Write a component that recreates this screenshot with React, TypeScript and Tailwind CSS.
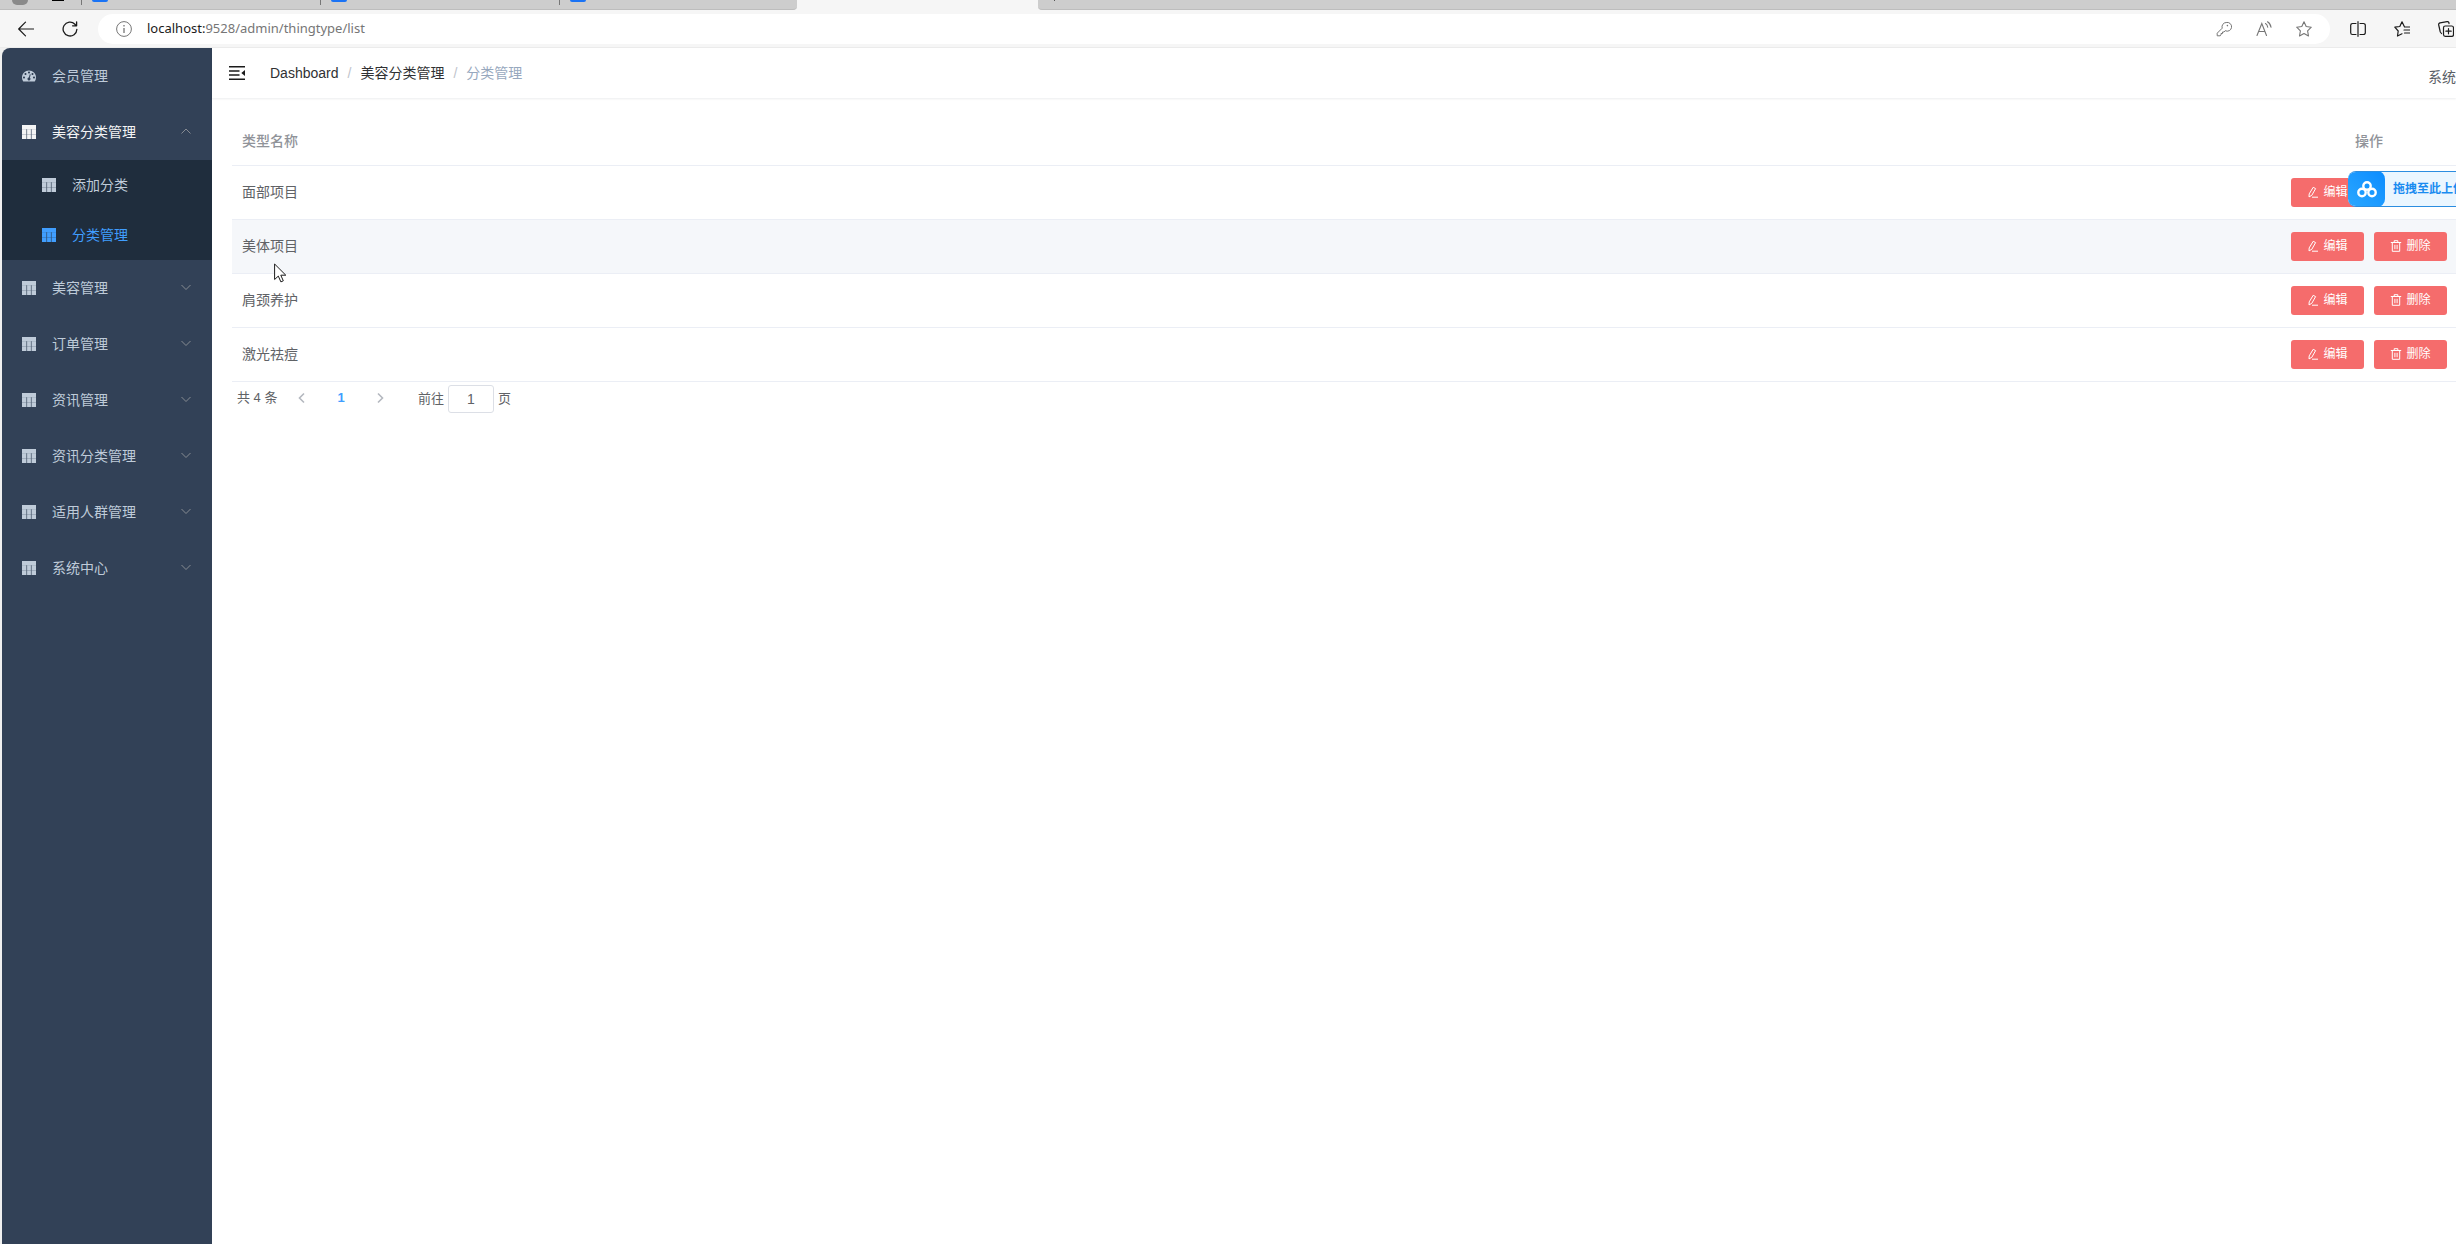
import React from "react";

const NAV_TEXT = "#bfcbd9";

function TableIcon() {
  return (
    <svg viewBox="0 0 14 14" className="size-3.5 shrink-0" aria-hidden="true">
      <path d="M0 0h14v14H0z" fill="currentColor" fillOpacity="0.55" />
      <path
        d="M0 0h14v4H0zM0 4.300h4.500v4.700H0zM5 4.300h4v4.700H5zM9.500 4.300H14v4.700H9.500zM0 9.600h4.500V14H0zM5 9.600h4V14H5zM9.500 9.600H14V14H9.500z"
        fill="currentColor"
      />
      <path d="M4.700 4.300V14M9.300 4.300V14" stroke="#304156" strokeWidth="0.500" />
    </svg>
  );
}

function DashboardIcon() {
  return (
    <svg viewBox="0 0 128 100" className="h-3 w-3.5 shrink-0" fill={NAV_TEXT} aria-hidden="true">
      <path d="M27.429 63.638c0-2.508-.893-4.655-2.679-6.441-1.786-1.786-3.94-2.68-6.464-2.68-2.524 0-4.679.894-6.465 2.68-1.785 1.786-2.678 3.933-2.678 6.44 0 2.509.893 4.656 2.678 6.442 1.786 1.786 3.941 2.678 6.465 2.678s4.678-.892 6.464-2.678c1.786-1.786 2.679-3.933 2.679-6.441zm13.714-31.825c0-2.508-.893-4.655-2.679-6.441-1.785-1.786-3.94-2.679-6.464-2.679-2.524 0-4.679.893-6.464 2.68-1.786 1.785-2.679 3.932-2.679 6.44 0 2.508.893 4.655 2.679 6.441 1.785 1.786 3.94 2.679 6.464 2.679 2.524 0 4.679-.893 6.464-2.679 1.786-1.786 2.679-3.933 2.679-6.44zM71.714 65.98l7.215-27.116c.285-1.23.107-2.378-.536-3.443-.643-1.064-1.56-1.762-2.75-2.094-1.19-.33-2.333-.177-3.429.462-1.095.639-1.81 1.573-2.143 2.804l-7.214 27.116c-2.857.237-5.405 1.266-7.643 3.088-2.238 1.822-3.738 4.152-4.5 6.992-.952 3.644-.476 7.098 1.429 10.364 1.905 3.265 4.69 5.37 8.357 6.317 3.667.947 7.143.474 10.429-1.42 3.285-1.892 5.404-4.66 6.357-8.305.762-2.84.619-5.607-.429-8.305-1.047-2.697-2.762-4.85-5.143-6.46zm47.143-2.342c0-2.508-.893-4.655-2.678-6.441-1.786-1.786-3.941-2.68-6.465-2.68-2.524 0-4.678.894-6.464 2.68-1.786 1.786-2.679 3.933-2.679 6.44 0 2.509.893 4.656 2.679 6.442 1.786 1.786 3.94 2.678 6.464 2.678 2.524 0 4.679-.892 6.465-2.678 1.785-1.786 2.678-3.933 2.678-6.441zm-45.714-45.43c0-2.509-.893-4.656-2.679-6.441C68.68 9.98 66.524 9.087 64 9.087c-2.524 0-4.679.893-6.464 2.679-1.786 1.785-2.679 3.932-2.679 6.44 0 2.508.893 4.655 2.679 6.441 1.785 1.786 3.94 2.679 6.464 2.679 2.524 0 4.679-.893 6.464-2.679 1.786-1.786 2.679-3.933 2.679-6.44zm32 13.605c0-2.508-.893-4.655-2.679-6.441-1.785-1.786-3.94-2.679-6.464-2.679-2.524 0-4.679.893-6.464 2.68-1.786 1.785-2.679 3.932-2.679 6.44 0 2.508.893 4.655 2.679 6.441 1.785 1.786 3.94 2.679 6.464 2.679 2.524 0 4.679-.893 6.464-2.679 1.786-1.786 2.679-3.933 2.679-6.44zM128 63.638c0 12.351-3.357 23.78-10.071 34.286-.905 1.372-2.19 2.058-3.858 2.058H13.93c-1.667 0-2.953-.686-3.858-2.058C3.357 87.465 0 76.037 0 63.638c0-8.613 1.69-16.847 5.071-24.703C8.452 31.08 13 24.312 18.714 18.634c5.715-5.68 12.524-10.199 20.429-13.559C47.048 1.715 55.333.035 64 .035c8.667 0 16.952 1.68 24.857 5.04 7.905 3.36 14.714 7.88 20.429 13.559 5.714 5.678 10.262 12.446 13.643 20.301 3.38 7.856 5.071 16.09 5.071 24.703z" />
    </svg>
  );
}

function Chevron({ up }: { up?: boolean }) {
  return (
    <svg
      viewBox="0 0 12 12"
      className="ml-auto size-3 shrink-0"
      fill="none"
      stroke="#909399"
      strokeWidth="0.900"
      aria-hidden="true"
    >
      <path d={up ? "M1.500 7.500 6 3l4.500 4.500" : "M1.500 3 6 7.500 10.500 3"} />
    </svg>
  );
}

function MenuItem({ label, open }: { label: string; open?: boolean }) {
  return (
    <button
      type="button"
      aria-expanded={!!open}
      className={
        open
          ? "flex h-14 w-full items-center px-5 text-[#f4f4f5]"
          : "flex h-14 w-full items-center px-5 text-[#bfcbd9]"
      }
    >
      <TableIcon />
      <span className="ml-4">{label}</span>
      <Chevron up={open} />
    </button>
  );
}

function Sidebar() {
  const rest = ["美容管理", "订单管理", "资讯管理", "资讯分类管理", "适用人群管理", "系统中心"];
  return (
    <nav className="w-[210px] shrink-0 rounded-tl-lg bg-[#324157] text-sm">
      <a href="#members" className="flex h-14 items-center pl-5 text-[#bfcbd9]">
        <DashboardIcon />
        <span className="ml-4">会员管理</span>
      </a>
      <MenuItem label="美容分类管理" open />
      <div className="bg-[#1f2d3d]">
        <a href="#add" className="flex h-[50px] items-center pl-10 text-[#bfcbd9]">
          <TableIcon />
          <span className="ml-4">添加分类</span>
        </a>
        <a href="#list" className="flex h-[50px] items-center pl-10 text-[#409eff]">
          <TableIcon />
          <span className="ml-4">分类管理</span>
        </a>
      </div>
      {rest.map((label) => (
        <MenuItem key={label} label={label} />
      ))}
    </nav>
  );
}

function BackgroundTab({ className }: { className: string }) {
  return (
    <div className={className}>
      <span className="ml-2.5 h-0.5 w-4 rounded-b-sm bg-[#1a73f5]" />
    </div>
  );
}

function TabStrip() {
  return (
    <div className="flex h-2.5 items-start bg-[#f6f6f6]">
      <div className="flex h-full w-[797px] items-start rounded-br-sm border-b border-[#bdbdbd] bg-[#cdcdcd]">
        <span className="ml-3 h-[5px] w-4 rounded-b-full bg-[#8a8a8a]" />
        <span className="ml-6 h-px w-3 bg-black" />
        <span className="w-[17px]" />
        <BackgroundTab className="flex h-[5px] w-[239px] items-start border-l border-[#777]" />
        <BackgroundTab className="flex h-[5px] w-[239px] items-start border-l border-[#777]" />
        <BackgroundTab className="flex h-[5px] w-[200px] items-start border-l border-[#777]" />
      </div>
      <div className="w-[241px]" />
      <div className="flex h-full flex-1 items-start rounded-bl-sm border-b border-[#bdbdbd] bg-[#cdcdcd]">
        <span className="ml-4 h-px w-px bg-[#555]" />
      </div>
    </div>
  );
}

function BrowserBar() {
  return (
    <div className="flex h-[38px] items-center border-b border-[#ececec] bg-[#f6f6f6] pl-[18px] text-[#1b1b1b]">
      <button type="button" aria-label="Back" className="size-4">
        <svg viewBox="0 0 16 16" fill="none" stroke="currentColor" strokeWidth="1.2" strokeLinecap="round" strokeLinejoin="round">
          <path d="M15.500 8H.8M7.500 1.200.7 8l6.800 6.800" />
        </svg>
      </button>
      <button type="button" aria-label="Refresh" className="ml-7 size-4">
        <svg viewBox="0 0 16 16" fill="none" stroke="currentColor" strokeWidth="1.3" strokeLinecap="round" strokeLinejoin="round">
          <path d="M14.900 8.300A6.900 6.900 0 1 1 12.900 3.200l1.300 1.400M14.600.8v4h-4" />
        </svg>
      </button>
      <div className="ml-5 flex h-[30px] flex-1 items-center rounded-full bg-white px-[18px] text-[#767676]">
        <svg viewBox="0 0 16 16" className="size-4" fill="none" stroke="currentColor" aria-hidden="true">
          <circle cx="8" cy="8" r="7.400" />
          <path d="M8 7v5M8 4v1.400" strokeWidth="1.300" />
        </svg>
        <p className="ml-[15px] font-['Noto_Sans','Open_Sans',sans-serif] text-[13px]">
          <span className="text-[#1b1b1b]">localhost:</span>9528/admin/thingtype/list
        </p>
        <div className="ml-auto flex items-center gap-6">
          <button type="button" aria-label="Passwords" className="size-4">
            <svg viewBox="0 0 16 16" fill="none" stroke="currentColor" strokeWidth="1" strokeLinejoin="round">
              <path d="M10.200 1.500a4.400 4.400 0 1 1-1 8.200L8 11H6.500v1.500H5V14l-.8.800H1.200v-2.600l5-5a4.400 4.400 0 0 1 4-5.700z" />
              <circle cx="11.400" cy="4.600" r=".8" fill="currentColor" stroke="none" />
            </svg>
          </button>
          <button type="button" aria-label="Read aloud" className="size-4">
            <svg viewBox="0 0 16 16" fill="none" stroke="currentColor" strokeWidth="1.100" strokeLinecap="round">
              <path d="M1 14.500 5.800 2.500l4.700 12M2.700 10.500h6.200M9.500 2.500c1.300.8 2 2 2.200 3.800M11.500.8c2 1.200 3.200 3 3.500 5.500" />
            </svg>
          </button>
          <button type="button" aria-label="Favorite" className="size-4">
            <svg viewBox="0 0 16 16" fill="none" stroke="currentColor" strokeWidth="1.100" strokeLinejoin="round">
              <path d="m8 .8 2.200 4.700 5.100.7-3.700 3.600.9 5.200L8 12.500 3.500 15l.9-5.200L.7 6.200l5.100-.7z" />
            </svg>
          </button>
        </div>
      </div>
      <div className="ml-5 flex w-[106px] shrink-0 items-center gap-7 overflow-hidden">
        <button type="button" aria-label="Split screen" className="size-4 shrink-0">
          <svg viewBox="0 0 16 16" fill="none" stroke="currentColor" strokeWidth="1.200" strokeLinecap="round">
            <path d="M6 2.500H2.500a1.800 1.800 0 0 0-1.800 1.800v7.400a1.800 1.800 0 0 0 1.800 1.800H6M10 2.500h3.500a1.800 1.800 0 0 1 1.800 1.800v7.400a1.800 1.800 0 0 1-1.800 1.800H10M8 .7v14.600" />
          </svg>
        </button>
        <button type="button" aria-label="Favorites list" className="size-4 shrink-0">
          <svg viewBox="0 0 16 16" fill="none" stroke="currentColor" strokeWidth="1.200" strokeLinecap="round" strokeLinejoin="round">
            <path d="M8 12.800 3.500 15l.7-5L.8 6.200l5-.7L8 .8l2.300 4.700M10.500 6h5M10 9h5.500M10.500 12h5" />
          </svg>
        </button>
        <button type="button" aria-label="Collections" className="size-4 shrink-0">
          <svg viewBox="0 0 16 16" fill="none" stroke="currentColor" strokeWidth="1.200" strokeLinecap="round" strokeLinejoin="round">
            <rect x="5.500" y="5" width="10" height="10.300" rx="1.800" />
            <path d="M10.500 7.500v5.300M7.900 10.200h5.300M3.500 12.500 2.300 11 .7 4a1.800 1.800 0 0 1 1.400-2.200L9 .6a1.800 1.800 0 0 1 2 1.400v.6" />
          </svg>
        </button>
      </div>
    </div>
  );
}

function Navbar() {
  return (
    <header className="flex h-[50px] items-center bg-white shadow-[0_1px_2px_rgba(0,21,41,0.08)]">
      <button type="button" aria-label="Toggle sidebar" className="ml-[17px] size-4">
        <svg viewBox="0 0 16 16" fill="none" stroke="#1b1b1b" strokeWidth="1.500">
          <path d="M0 1.800h16M0 6h10.500M0 10h10.500M0 14.200h16" />
          <path d="M16 5v6L12.300 8z" fill="#1b1b1b" stroke="none" />
        </svg>
      </button>
      <nav aria-label="Breadcrumb" className="ml-[25px] flex items-center gap-[9px] text-sm text-[#303133]">
        <a href="#dashboard">Dashboard</a>
        <span className="text-[#c0c4cc]">/</span>
        <a href="#types">美容分类管理</a>
        <span className="text-[#c0c4cc]">/</span>
        <span className="text-[#97a8be]">分类管理</span>
      </nav>
      <div className="ml-auto w-7 overflow-hidden pt-2 text-sm whitespace-nowrap text-[#5a5e66]">系统</div>
    </header>
  );
}

function EditIcon() {
  return (
    <svg viewBox="0 0 12 12" className="size-3" fill="none" stroke="currentColor" aria-hidden="true">
      <path d="M6.200 1.300 8.600 2.600 4.800 9.300 2 10.900 2.200 7.900zM5 11.200h6" />
    </svg>
  );
}

function DeleteIcon() {
  return (
    <svg viewBox="0 0 12 12" className="size-3" fill="none" stroke="currentColor" aria-hidden="true">
      <path d="M.8 2.500h10.400M4.200 2.500v-1.800h3.600v1.800M2.300 2.500v8.800h7.400V2.500M4.900 4.800v4.400M7.100 4.800v4.400" />
    </svg>
  );
}

function ActionButton({ icon, label }: { icon: React.ReactNode; label: string }) {
  return (
    <button
      type="button"
      className="flex h-[29px] w-[73px] items-center justify-center gap-1 rounded-[3px] bg-[#f56c6c] text-xs text-white"
    >
      {icon}
      {label}
    </button>
  );
}

function TypeTable() {
  const rows = ["面部项目", "美体项目", "肩颈养护", "激光祛痘"];
  return (
    <table className="w-full table-fixed border-collapse text-sm text-[#606266]">
      <thead>
        <tr className="h-[47px] border-b border-[#ebeef5] text-[#909399]">
          <th className="px-2.5 text-left font-medium">类型名称</th>
          <th className="w-[174px] text-center font-medium">操作</th>
        </tr>
      </thead>
      <tbody>
        {rows.map((name, i) => (
          <tr
            key={name}
            className={i === 1 ? "h-[54px] border-b border-[#ebeef5] bg-[#f5f7fa]" : "h-[54px] border-b border-[#ebeef5]"}
          >
            <td className="px-2.5">{name}</td>
            <td>
              <div className="flex justify-center gap-2.5">
                <ActionButton icon={<EditIcon />} label="编辑" />
                <ActionButton icon={<DeleteIcon />} label="删除" />
              </div>
            </td>
          </tr>
        ))}
      </tbody>
    </table>
  );
}

function PageArrow({ label, path }: { label: string; path: string }) {
  return (
    <button type="button" aria-label={label} className="flex w-[30px] justify-center" disabled>
      <svg viewBox="0 0 12 12" className="size-3" fill="none" stroke="#b4b8bf" strokeWidth="1.600">
        <path d={path} />
      </svg>
    </button>
  );
}

function Pagination() {
  return (
    <div className="flex h-8 items-center pl-[5px] text-[13px] text-[#606266]">
      <span className="w-[50px]">共 4 条</span>
      <PageArrow label="Previous page" path="M8 1.500 3.500 6 8 10.500" />
      <button type="button" className="mx-1 w-10 text-center font-bold text-[#409eff]">
        1
      </button>
      <PageArrow label="Next page" path="M4 1.500 8.500 6 4 10.500" />
      <label className="ml-[23px] flex items-center gap-1 pt-0.5">
        前往
        <input
          type="text"
          defaultValue="1"
          className="h-7 w-[46px] rounded-[3px] border border-[#dcdfe6] text-center text-sm outline-none"
        />
        页
      </label>
    </div>
  );
}

function UploadDropBadge() {
  return (
    <div className="absolute top-[171px] right-0 flex h-9 w-[108px] items-center overflow-hidden rounded-l-lg border-y border-[#2b8de0] bg-[#eaf6ff]">
      <span className="flex h-9 w-[37px] shrink-0 items-center justify-center rounded-lg bg-linear-to-tr from-[#2aa7ff] to-[#0a8cff]">
        <svg viewBox="0 0 20 17" className="h-[17px] w-5" fill="none" stroke="#fff" strokeWidth="2.400" aria-hidden="true">
          <circle cx="5" cy="11.500" r="3.700" />
          <circle cx="15" cy="11.500" r="3.700" />
          <circle cx="10" cy="5" r="3.700" fill="#1697ff" />
        </svg>
      </span>
      <span className="ml-2 text-xs font-bold whitespace-nowrap text-[#1a8cf0]">拖拽至此上传</span>
    </div>
  );
}

function Cursor() {
  return (
    <svg viewBox="0 0 13 20" className="absolute top-[263px] left-[274px] h-5 w-[13px]" fill="#fff" stroke="#1b1b1b" aria-hidden="true">
      <path d="M.6 1v15.500l3.700-3.400 2.600 5.800 2.400-1.100-2.500-5.600h5z" />
    </svg>
  );
}

export default function App() {
  return (
    <div className="relative flex min-h-screen flex-col overflow-hidden bg-white font-['Liberation_Sans','Noto_Sans_CJK_SC',sans-serif]">
      <TabStrip />
      <BrowserBar />
      <div className="flex flex-1 bg-[#f0f0f0] pl-0.5">
        <Sidebar />
        <div className="min-w-0 flex-1 bg-white">
          <Navbar />
          <main className="pt-5 pl-5">
            <TypeTable />
            <Pagination />
          </main>
        </div>
      </div>
      <UploadDropBadge />
      <Cursor />
    </div>
  );
}
